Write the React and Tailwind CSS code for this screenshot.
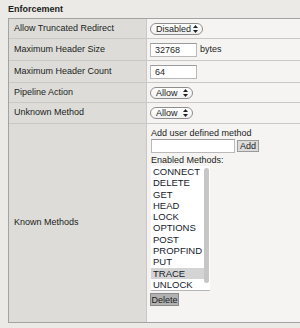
import React from "react";

const methods = [
  "CONNECT",
  "DELETE",
  "GET",
  "HEAD",
  "LOCK",
  "OPTIONS",
  "POST",
  "PROPFIND",
  "PUT",
  "TRACE",
  "UNLOCK",
];

const Arrows = () => (
  <svg width="5" height="8" viewBox="0 0 5 8" className="shrink-0">
    <path d="M2.5 0 L5 3 L0 3 Z" fill="#222" />
    <path d="M0 5 L5 5 L2.5 8 Z" fill="#222" />
  </svg>
);

const Select = ({ value, width }) => (
  <div
    className={`flex items-center justify-between h-[12px] rounded-full border border-[#8e8e8e] bg-gradient-to-b from-white to-[#f0f0f0] pl-[5px] pr-[4px] ${width}`}
  >
    <span className="leading-[10px]">{value}</span>
    <Arrows />
  </div>
);

const Input = ({ value, width }) => (
  <div
    className={`h-[14px] border border-[#b9b9b9] border-t-[#9c9c9c] bg-white pl-[4px] leading-[12px] ${width}`}
  >
    {value}
  </div>
);

const Row = ({ label, height, children }) => (
  <div className={`flex border-b border-[#c9c8c4] ${height}`}>
    <div className="flex items-center w-[138px] shrink-0 border-r border-[#c9c8c4] bg-[#dddcd8] pl-[5px]">
      {label}
    </div>
    <div className="flex items-center flex-1 bg-[#f5f4f2] pl-[3px]">
      {children}
    </div>
  </div>
);

export default function App() {
  return (
    <div className="w-[300px] h-[328px] overflow-hidden bg-[#ebeae6] text-[9px] text-[#1c1c1c] font-['Liberation_Sans',Arial,sans-serif]">
      <div className="h-[18px] pl-[8px] pt-[4px] font-bold leading-[11px]">
        Enforcement
      </div>
      <div className="ml-[8px] border-t border-l border-[#a3a3a3]">
        <Row label="Allow Truncated Redirect" height="h-[20px]">
          <Select value="Disabled" width="w-[53px]" />
        </Row>
        <Row label="Maximum Header Size" height="h-[22px]">
          <Input value="32768" width="w-[47px]" />
          <span className="ml-[3px]">bytes</span>
        </Row>
        <Row label="Maximum Header Count" height="h-[22px]">
          <Input value="64" width="w-[47px]" />
        </Row>
        <Row label="Pipeline Action" height="h-[20px]">
          <Select value="Allow" width="w-[43px]" />
        </Row>
        <Row label="Unknown Method" height="h-[21px]">
          <Select value="Allow" width="w-[43px]" />
        </Row>
        <div className="flex h-[199px] border-b border-[#a3a3a3]">
          <div className="flex items-center w-[138px] shrink-0 border-r border-[#c9c8c4] bg-[#dddcd8] pl-[5px]">
            Known Methods
          </div>
          <div className="flex-1 bg-[#f5f4f2] pl-[4px] pt-[3px]">
            <div className="leading-[12px]">Add user defined method</div>
            <div className="flex items-center h-[14px]">
              <div className="w-[84px] h-[14px] border border-[#b9b9b9] border-t-[#9c9c9c] bg-white" />
              <div className="ml-[2px] h-[12px] px-[2px] border border-[#9a9a9a] bg-[#dcdcdc] leading-[10px]">
                Add
              </div>
            </div>
            <div className="mt-[1px] leading-[12px]">Enabled Methods:</div>
            <div className="relative w-[59px] h-[125px] overflow-hidden border-b border-[#b5b5b5] bg-white">
              <div className="pr-[5px]">
                {methods.map((m) => (
                  <div
                    key={m}
                    className={`h-[11.3px] pl-[2px] leading-[11.3px] text-[9.5px] text-[#161a2a] ${
                      m === "TRACE" ? "bg-[#d4d4d4]" : ""
                    }`}
                  >
                    {m}
                  </div>
                ))}
              </div>
              <div className="absolute right-[1px] top-[2px] h-[115px] w-[5px] rounded-full bg-[#c6c6c6]" />
            </div>
            <div className="mt-[2px] -ml-px flex items-center justify-center w-[29px] h-[13px] border border-[#8a8a8a] bg-[#b2b2b2] leading-[10px]">
              Delete
            </div>
          </div>
        </div>
      </div>
    </div>
  );
}
